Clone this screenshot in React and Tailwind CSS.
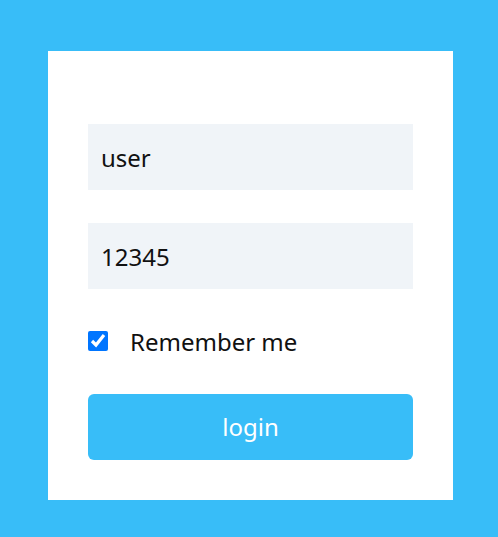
const App = () => {
  return (
    <div className="min-h-screen bg-[#38bdf8] pl-12 pt-[51px] pb-[37px]" style={{ fontFamily: '"Noto Sans", "Open Sans", sans-serif' }}>
      <div className="w-[405px] bg-white px-10 pt-[73px] pb-10 flex flex-col">
        <input
          type="text"
          defaultValue="user"
          className="shrink-0 h-[66px] w-full bg-[#f0f4f8] pl-[13px] text-[24px] text-[#111] outline-none"
        />
        <input
          type="text"
          defaultValue="12345"
          className="shrink-0 mt-[33px] h-[66px] w-full bg-[#f0f4f8] pl-[13px] text-[24px] text-[#111] outline-none"
        />
        <label className="shrink-0 mt-[42px] h-5 flex items-center text-[24px] text-[#111] leading-none">
          <input type="checkbox" defaultChecked className="w-5 h-5 m-0 accent-[#0075ff]" />
          <span className="ml-[22px] pt-[2px]">Remember me</span>
        </label>
        <button className="shrink-0 mt-[43px] h-[66px] w-full rounded-md bg-[#38bdf8] text-white text-[24px]">
          login
        </button>
      </div>
    </div>
  );
};

export default App;
